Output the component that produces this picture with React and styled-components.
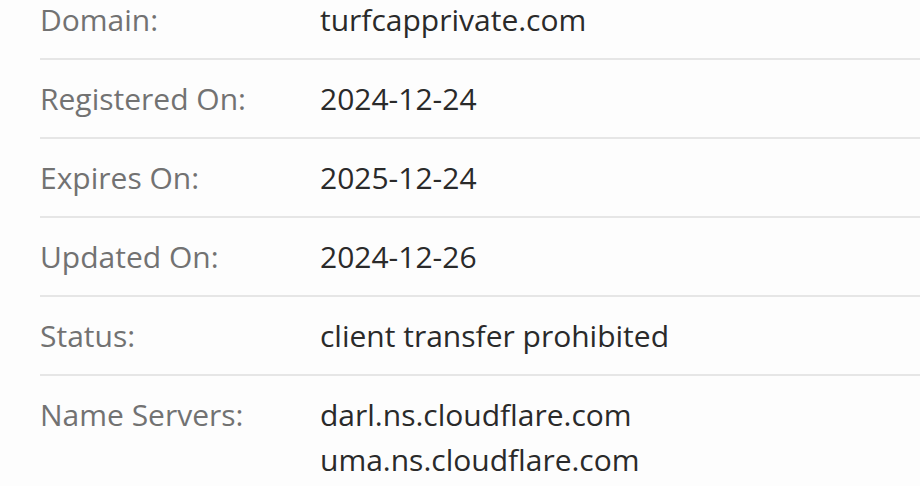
import styled, { createGlobalStyle } from 'styled-components';

const Global = createGlobalStyle`
  body {
    margin: 0;
    background: #fdfdfd;
    font-family: 'Open Sans', 'Liberation Sans', sans-serif;
  }
`;

const rows = [
    { label: 'Domain:', values: ['turfcapprivate.com'] },
    { label: 'Registered On:', values: ['2024-12-24'] },
    { label: 'Expires On:', values: ['2025-12-24'] },
    { label: 'Updated On:', values: ['2024-12-26'] },
    { label: 'Status:', values: ['client transfer prohibited'] },
    { label: 'Name Servers:', values: ['darl.ns.cloudflare.com', 'uma.ns.cloudflare.com'] },
];

const App = () => {
    return (
        <>
            <Global />
            <Table>
                {rows.map((r, i) => (
                    <Row key={r.label} last={i === rows.length - 1}>
                        <Label>{r.label}</Label>
                        <Value>
                            {r.values.map((v) => (
                                <div key={v}>{v}</div>
                            ))}
                        </Value>
                    </Row>
                ))}
            </Table>
        </>
    );
};

const Table = styled.div`
    margin: -19px 0 0 40px;
    width: 900px;
`;

const Row = styled.div`
    display: grid;
    grid-template-columns: 280px 1fr;
    padding: 16px 0;
    border-bottom: ${(p) => (p.last ? 'none' : '2px solid #e6e6e6')};
    font-size: 30px;
    line-height: 45px;
`;

const Label = styled.div`
    color: #727272;
`;

const Value = styled.div`
    color: #2a2a2a;
`;

export default App;
